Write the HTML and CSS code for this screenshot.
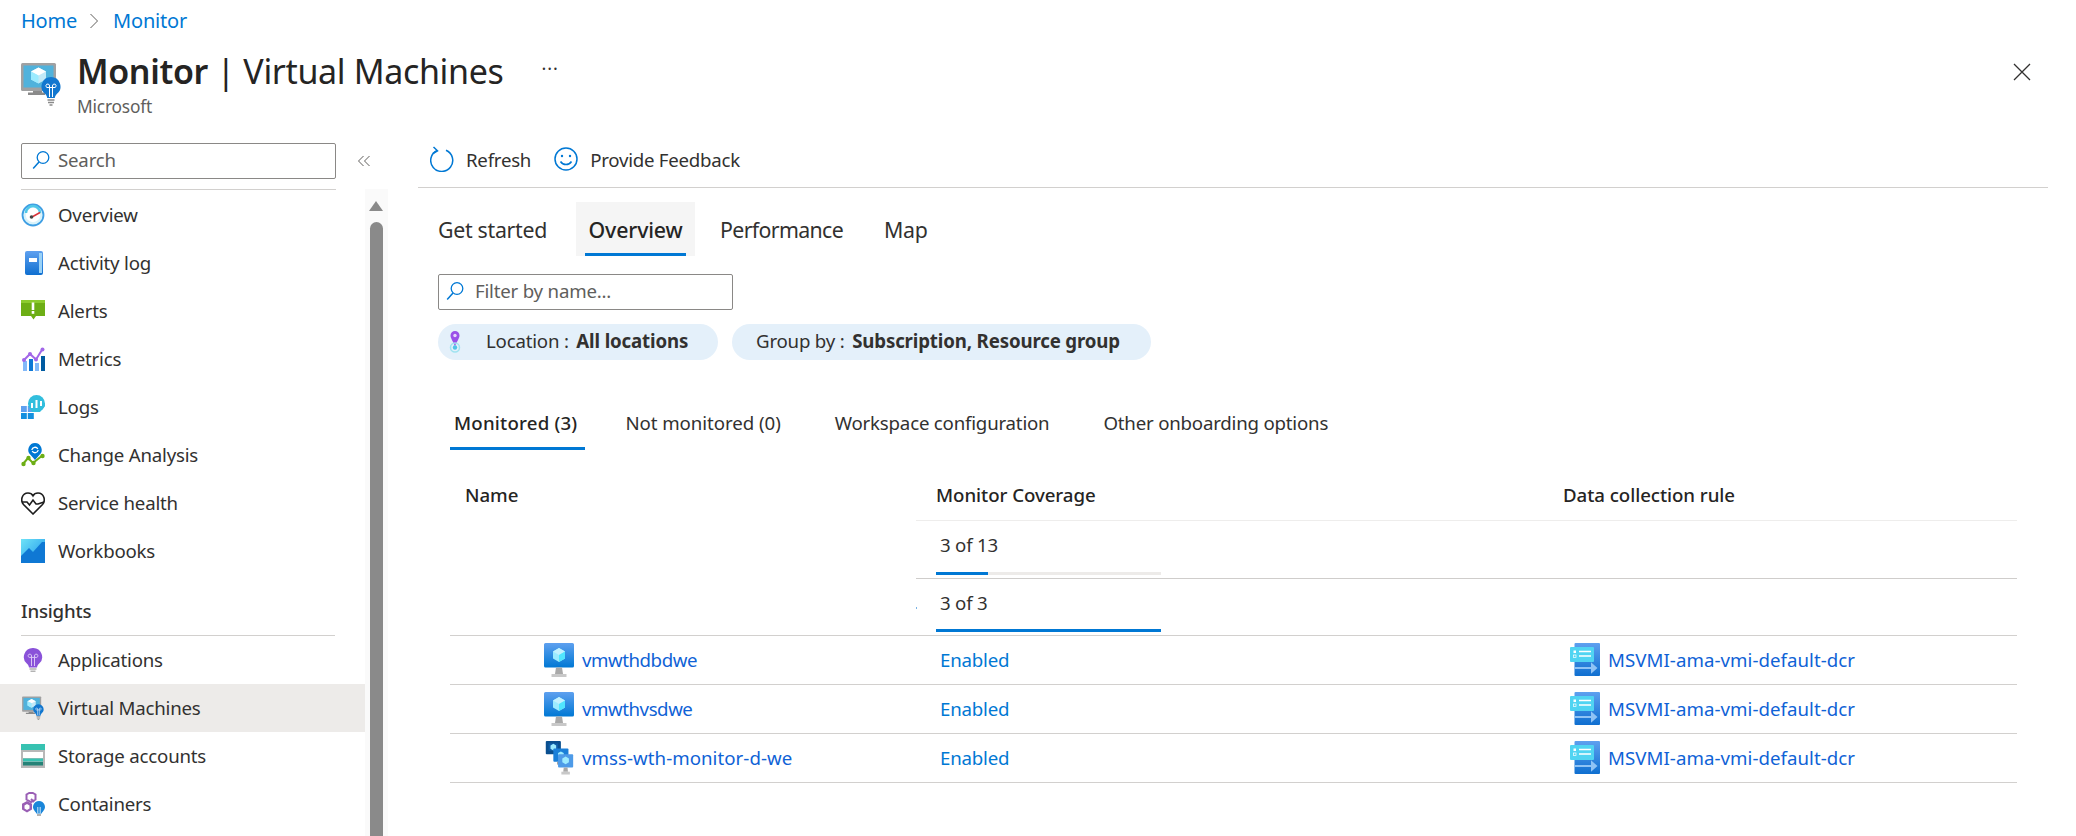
FILE: index.html
```html
<!DOCTYPE html>
<html lang="en">
<head>
<meta charset="utf-8">
<title>Monitor | Virtual Machines</title>
<link rel="stylesheet" href="styles.css">
</head>
<body>
<svg class="defs" width="0" height="0" aria-hidden="true">
  <defs>
    <linearGradient id="gScreen" x1="0" y1="0" x2="0" y2="1"><stop offset="0" stop-color="#5ea0ef"/><stop offset="1" stop-color="#0078d4"/></linearGradient>
    <linearGradient id="gBook" x1="0" y1="0" x2="0" y2="1"><stop offset="0" stop-color="#5ea0ef"/><stop offset="1" stop-color="#0f6fd0"/></linearGradient>
    <linearGradient id="gWork" x1="0" y1="0" x2="1" y2="1"><stop offset="0" stop-color="#6fe3f7"/><stop offset="1" stop-color="#1b93eb"/></linearGradient>
    <symbol id="i-search" viewBox="0 0 18 20"><circle cx="11" cy="7.5" r="5.8" fill="none" stroke="#0078d4" stroke-width="1.3"/><path d="M7 12 1.2 18.6" stroke="#0078d4" stroke-width="1.5" fill="none"/></symbol>
    <symbol id="i-vminsight" viewBox="0 0 40 44">
      <rect x="0" y="1" width="35" height="28" rx="1.5" fill="#a0a1a2"/><rect x="2.5" y="3.5" width="30" height="22" fill="#50b2dc"/>
      <path d="M7 33h17v-2.500h-3V29h-9v1.500H7z" fill="#8a8a8a"/>
      <path d="M17.500 5.500 25 9.500v8l-7.500 4-7.500-4v-8z" fill="#c3e9f7"/><path d="M17.500 5.500 25 9.500l-7.500 4-7.500-4z" fill="#fff"/><path d="M17.500 13.500v8l-7.500-4v-8z" fill="#9cebff"/>
      <path d="M30 15a9.500 9.500 0 0 0-6 16.800c1.300 1.200 2 2.500 2.200 4.200h7.600c.2-1.700 1-3 2.200-4.200A9.500 9.500 0 0 0 30 15z" fill="#1277cf"/>
      <path d="M28.500 35v-11m3 11v-11M28.500 24a1.800 1.800 0 1 0-2.500 1.500h8a1.800 1.800 0 1 0-2.500-1.500" fill="none" stroke="#fff" stroke-width="1"/>
      <path d="M26.500 38h7M27 40.500h6M28.500 43h3" stroke="#8a8a8a" stroke-width="1.500"/>
    </symbol>
    <symbol id="i-overview" viewBox="0 0 24 24"><circle cx="12" cy="12" r="10.500" fill="#d8f3fb" stroke="#3e9ee3" stroke-width="1.800"/><circle cx="12" cy="12" r="7.200" fill="#fff"/><path d="M5 10a7 7 0 0 1 14 0" fill="none" stroke="#50c7e8" stroke-width="2.500"/><path d="M11 14 19 9.500" stroke="#d8333b" stroke-width="1.500"/><circle cx="10.500" cy="14" r="1.800" fill="#444"/></symbol>
    <symbol id="i-book" viewBox="0 0 24 24"><rect x="4" y="0" width="18" height="24" rx="2" fill="url(#gBook)"/><rect x="18" y="2" width="3" height="20" fill="#9ad2f6"/><rect x="8" y="7" width="8" height="4" fill="#fff"/></symbol>
    <symbol id="i-alert" viewBox="0 0 24 24"><path d="M0 1h24v16H15l-2.500 3.500L10 17H0z" fill="#6dae15"/><rect x="0" y="1" width="24" height="3" fill="#8ccb2e"/><rect x="10.700" y="3.500" width="2.600" height="7.500" fill="#fff"/><rect x="10.700" y="12" width="2.600" height="2.800" fill="#fff"/></symbol>
    <symbol id="i-metrics" viewBox="0 0 24 24"><rect x="2" y="14" width="4" height="10" fill="#83b9f9"/><rect x="8" y="12" width="4" height="12" fill="#0f78d4"/><rect x="14" y="16" width="4" height="8" fill="#83b9f9"/><rect x="20" y="9" width="4" height="15" fill="#005ba1"/><path d="M3 13 9 7l6 5.500L21.500 2" fill="none" stroke="#a267e8" stroke-width="2"/><circle cx="3" cy="13" r="2" fill="#a267e8"/><circle cx="9" cy="7" r="2" fill="#a267e8"/><circle cx="15" cy="12.500" r="2" fill="#a267e8"/><circle cx="21.500" cy="2.500" r="2" fill="#a267e8"/></symbol>
    <symbol id="i-logs" viewBox="0 0 24 24"><rect x="0" y="11" width="5.800" height="6" fill="#5ea0ef"/><rect x="0" y="18" width="5.800" height="6" fill="#1490df"/><rect x="6.800" y="11" width="6" height="6" fill="#5ea0ef"/><rect x="6.800" y="18" width="6" height="6" fill="#1490df"/><circle cx="15.500" cy="8.500" r="8.500" fill="#32bedd"/><path d="M7 8h17v3l-5 6h-8z" fill="#32bedd"/><path d="M11 8v5M15.500 5v8M20 6v5" stroke="#fff" stroke-width="2"/></symbol>
    <symbol id="i-change" viewBox="0 0 24 24"><path d="M2 21 7 15l5 5 10-8" fill="none" stroke="#6dae15" stroke-width="2"/><circle cx="2.500" cy="21" r="2.200" fill="#6dae15"/><circle cx="7.500" cy="15" r="2.200" fill="#6dae15"/><circle cx="12.500" cy="20" r="2.200" fill="#6dae15"/><circle cx="21.500" cy="13" r="2.200" fill="#6dae15"/><path d="M14 0a6.800 6.800 0 0 0-4.800 11.500L14 17l4.800-5.500A6.800 6.800 0 0 0 14 0z" fill="#0078d4"/><path d="M10.800 7a3.200 3.200 0 0 1 6-1M17.200 7a3.200 3.200 0 0 1-6 1" fill="none" stroke="#fff" stroke-width="1.300"/></symbol>
    <symbol id="i-health" viewBox="0 0 24 24"><path d="M12 23 2.500 13.500C-1 9.500 1 2 7 2c2.500 0 4 1 5 2.800C13 3 14.500 2 17 2c6 0 8 7.500 4.500 11.500z" fill="#fff" stroke="#1d1d1d" stroke-width="1.600"/><path d="M1 11h5l2.500 3 3.500-5 3 4h2l6-2" fill="#fff" stroke="#1d1d1d" stroke-width="1.600"/></symbol>
    <symbol id="i-work" viewBox="0 0 24 24"><path d="M0 0h24v24H0z" fill="url(#gWork)"/><path d="M0 17 8 9l4 4L21 3h3v21H0z" fill="#0f78d4"/></symbol>
    <symbol id="i-app" viewBox="0 0 24 24"><path d="M12 0a9 9 0 0 0-6 15.800c1.200 1.100 1.800 2.200 2 3.700h8c.2-1.500.8-2.600 2-3.700A9 9 0 0 0 12 0z" fill="#8a52d9"/><path d="M10.500 18V8m3 10V8M10.500 8a1.700 1.700 0 1 0-2.300 1.400h7.600A1.700 1.700 0 1 0 13.500 8" fill="none" stroke="#d9c4f5" stroke-width="1"/><path d="M8.500 21h7M9.500 23.200h5" stroke="#b3b3b3" stroke-width="1.600"/></symbol>
    <symbol id="i-storage" viewBox="0 0 24 24"><rect x="0" y="0" width="24" height="24" fill="#b8b8b8"/><rect x="0" y="0" width="24" height="6" fill="#37c2b1"/><rect x="2" y="8" width="20" height="6" fill="#fff"/><rect x="2" y="14.500" width="20" height="3" fill="#37c2b1"/><rect x="2" y="18" width="20" height="3.500" fill="#258277"/></symbol>
    <symbol id="i-cont" viewBox="0 0 24 24"><path d="M10 0l4.500 2.500v5L10 10 5.500 7.500v-5z" fill="none" stroke="#9a5fb5" stroke-width="2"/><path d="M6 9l5 2.800v5.800L6 20.500 1 17.600v-5.800z" fill="#9a5fb5"/><path d="M6 12l2.500 1.500v3L6 18l-2.500-1.500v-3z" fill="#fff"/><path d="M10 7l3 3" stroke="#9a5fb5" stroke-width="2"/><path d="M18 9a6 6 0 0 0-4 10.400c.8.800 1.200 1.400 1.300 2.100h5.400c.1-.7.500-1.300 1.300-2.100A6 6 0 0 0 18 9z" fill="#1a86d9"/><path d="M16.800 21v-6m2.400 6v-6" stroke="#fff" stroke-width=".8"/><path d="M16 23h4" stroke="#888" stroke-width="1.300"/></symbol>
    <symbol id="i-vm" viewBox="0 0 30 34"><path d="M1.500 0h27A1.500 1.500 0 0 1 30 1.500V23a1.500 1.500 0 0 1-1.500 1.500h-27A1.500 1.500 0 0 1 0 23V1.500A1.500 1.500 0 0 1 1.500 0z" fill="url(#gScreen)"/><path d="M15 5 21 8.500v7L15 19l-6-3.500v-7z" fill="#9cebff"/><path d="M15 5 21 8.500l-6 3.500-6-3.500z" fill="#c3f1ff"/><path d="M15 12v7l6-3.500v-7z" fill="#50e6ff"/><path d="M12 24.500h6l1 6.500h-8z" fill="#a9a9a9"/><path d="M7.500 31h15v3h-15z" fill="#c8c8c8"/></symbol>
    <symbol id="i-vmss" viewBox="0 0 30 36"><rect x="1" y="0" width="16" height="14" rx="1" fill="#0a4f8f"/><rect x="4" y="2.500" width="10" height="8" fill="#0f5da8"/><path d="M9 3l3 1.700v3.600L9 10 6 8.300V4.700z" fill="#9cebff"/><rect x="9" y="8" width="16" height="14" rx="1" fill="#1a7fd8"/><path d="M17 11l3 1.700v3.600L17 18l-3-1.700v-3.600z" fill="#9cebff"/><path d="M13 22h8v3h-8z" fill="#999"/><rect x="14" y="14" width="16" height="14" rx="1" fill="#4e9be8"/><path d="M22 16.500l3.500 2v4l-3.500 2-3.500-2v-4z" fill="#9cebff"/><path d="M20 28h4l.5 4.500h-5z" fill="#a9a9a9"/><path d="M17.500 32.500h9v3h-9z" fill="#c8c8c8"/></symbol>
    <symbol id="i-dcr" viewBox="0 0 30 33"><rect x="4.500" y="0" width="25.500" height="33" rx="1" fill="url(#gBook)"/><rect x="0" y="4" width="24" height="15" rx="1" fill="#50d4f2"/><path d="M9 8.500h12M9 13h12" stroke="#fff" stroke-width="1.400"/><rect x="3.500" y="7.500" width="2.500" height="2.500" fill="#fff"/><rect x="3.500" y="12" width="2.500" height="2.500" fill="none" stroke="#fff" stroke-width=".7"/><path d="M4.500 25H25M22 21.500 26 25l-4 3.500z" stroke="#8fc3f5" stroke-width="2" fill="#8fc3f5"/></symbol>
    <symbol id="i-pin" viewBox="0 0 12 22"><path d="M6 0a4.500 4.500 0 0 0-4.500 4.500C1.500 7.500 4.500 11 6 15.500 7.500 11 10.500 7.500 10.500 4.500A4.500 4.500 0 0 0 6 0z" fill="#9a4fe8"/><circle cx="6" cy="4.500" r="1.700" fill="#e6d5fa"/><circle cx="6" cy="16.500" r="4.500" fill="none" stroke="#9fe3f0" stroke-width="1.500"/><circle cx="6" cy="16.500" r="2.200" fill="#4fc3e8"/></symbol>
  </defs>
</svg>

<header class="page-head">
  <nav class="crumbs"><a class="link">Home</a><svg class="crumb-sep" viewBox="0 0 10 16"><path d="M1.500 1 8.500 8l-7 7" fill="none" stroke="#605e5c" stroke-width="1"/></svg><a class="link">Monitor</a></nav>
  <div class="title-row">
    <svg class="title-icon"><use href="#i-vminsight"/></svg>
    <div class="title-text">
      <h1 class="title"><b class="title-strong">Monitor</b> | Virtual Machines</h1>
      <div class="subtitle">Microsoft</div>
    </div>
    <span class="ellipsis">···</span>
    <svg class="close" viewBox="0 0 18 18"><path d="M1 1l16 16M17 1 1 17" stroke="#323130" stroke-width="1.300" fill="none"/></svg>
  </div>
</header>

<div class="layout">
  <aside class="sidebar">
    <div class="side-main">
      <div class="side-search-row">
        <div class="searchbox side-search"><svg class="search-icon"><use href="#i-search"/></svg><span class="placeholder">Search</span></div>
      </div>
      <nav class="side-nav">
        <a class="nav-item"><svg class="nav-icon"><use href="#i-overview"/></svg>Overview</a>
        <a class="nav-item"><svg class="nav-icon"><use href="#i-book"/></svg>Activity log</a>
        <a class="nav-item"><svg class="nav-icon"><use href="#i-alert"/></svg>Alerts</a>
        <a class="nav-item"><svg class="nav-icon"><use href="#i-metrics"/></svg>Metrics</a>
        <a class="nav-item"><svg class="nav-icon"><use href="#i-logs"/></svg>Logs</a>
        <a class="nav-item"><svg class="nav-icon"><use href="#i-change"/></svg>Change Analysis</a>
        <a class="nav-item"><svg class="nav-icon"><use href="#i-health"/></svg>Service health</a>
        <a class="nav-item"><svg class="nav-icon"><use href="#i-work"/></svg>Workbooks</a>
        <div class="nav-section">Insights</div>
        <a class="nav-item"><svg class="nav-icon"><use href="#i-app"/></svg>Applications</a>
        <a class="nav-item active"><svg class="nav-icon"><use href="#i-vminsight"/></svg>Virtual Machines</a>
        <a class="nav-item"><svg class="nav-icon"><use href="#i-storage"/></svg>Storage accounts</a>
        <a class="nav-item"><svg class="nav-icon"><use href="#i-cont"/></svg>Containers</a>
      </nav>
    </div>
    <div class="side-rail">
      <svg class="collapse" viewBox="0 0 14 14"><path d="M6.500 2 1.500 7l5 5M12.500 2l-5 5 5 5" fill="none" stroke="#605e5c" stroke-width="1"/></svg>
      <div class="scrolltrack">
        <span class="scroll-up"></span>
        <span class="scroll-thumb"></span>
      </div>
    </div>
  </aside>

  <main class="content">
    <div class="toolbar">
      <a class="tool"><svg class="tool-icon" viewBox="0 0 24 26"><path d="M7 4.500a11 11 0 1 0 9 -.2" fill="none" stroke="#0078d4" stroke-width="1.500"/><path d="M3.500 1 7.500 4.800 3 7.500" fill="none" stroke="#0078d4" stroke-width="1.500"/></svg>Refresh</a>
      <a class="tool"><svg class="tool-icon" viewBox="0 0 24 26"><circle cx="12" cy="13" r="11" fill="none" stroke="#0078d4" stroke-width="1.500"/><circle cx="8" cy="10" r="1.200" fill="#0078d4"/><circle cx="16" cy="10" r="1.200" fill="#0078d4"/><path d="M6.500 15.500c2.500 4 8.500 4 11 0" fill="none" stroke="#0078d4" stroke-width="1.500"/></svg>Provide Feedback</a>
    </div>

    <div class="tabs">
      <a class="tab">Get started</a>
      <a class="tab tab-active">Overview</a>
      <a class="tab tab-perf">Performance</a>
      <a class="tab">Map</a>
    </div>

    <div class="searchbox filter"><svg class="search-icon"><use href="#i-search"/></svg><span class="placeholder">Filter by name...</span></div>

    <div class="pills">
      <span class="pill pill-loc"><svg class="pin"><use href="#i-pin"/></svg>Location :&nbsp;<b class="pill-strong">All locations</b></span>
      <span class="pill pill-group">Group by :&nbsp;<b class="pill-strong">Subscription, Resource group</b></span>
    </div>

    <div class="subtabs">
      <a class="subtab subtab-active">Monitored (3)</a>
      <a class="subtab subtab-not">Not monitored (0)</a>
      <a class="subtab">Workspace configuration</a>
      <a class="subtab">Other onboarding options</a>
    </div>

    <section class="table">
      <div class="row head-row">
        <div class="col-name">Name</div>
        <div class="col-cov">Monitor Coverage</div>
        <div class="col-dcr">Data collection rule</div>
      </div>
      <div class="row summary">
        <div></div>
        <div class="sum-cell sum-first"><span class="sum-text">3 of 13</span><span class="bar"><span class="bar-fill" style="width:23%"></span></span></div>
      </div>
      <div class="row summary">
        <div></div>
        <div class="sum-cell sum-second"><span class="speck"></span><span class="sum-text">3 of 3</span><span class="bar"><span class="bar-fill" style="width:100%"></span></span></div>
      </div>
      <div class="row data-row">
        <div class="cell-name"><svg class="res-icon"><use href="#i-vm"/></svg><a class="res-link">vmwthdbdwe</a></div>
        <div class="cell-cov"><a class="link">Enabled</a></div>
        <div class="cell-dcr"><svg class="dcr-icon"><use href="#i-dcr"/></svg><a class="res-link res-wide">MSVMI-ama-vmi-default-dcr</a></div>
      </div>
      <div class="row data-row">
        <div class="cell-name"><svg class="res-icon"><use href="#i-vm"/></svg><a class="res-link">vmwthvsdwe</a></div>
        <div class="cell-cov"><a class="link">Enabled</a></div>
        <div class="cell-dcr"><svg class="dcr-icon"><use href="#i-dcr"/></svg><a class="res-link res-wide">MSVMI-ama-vmi-default-dcr</a></div>
      </div>
      <div class="row data-row">
        <div class="cell-name"><svg class="res-icon"><use href="#i-vmss"/></svg><a class="res-link res-wide">vmss-wth-monitor-d-we</a></div>
        <div class="cell-cov"><a class="link">Enabled</a></div>
        <div class="cell-dcr"><svg class="dcr-icon"><use href="#i-dcr"/></svg><a class="res-link res-wide">MSVMI-ama-vmi-default-dcr</a></div>
      </div>
    </section>
  </main>
</div>
</body>
</html>
```
FILE: styles.css
```css
* { box-sizing: border-box; }
html, body { margin: 0; height: 100%; overflow: hidden; background: #fff; }
body {
  font-family: "Noto Sans", "Open Sans", "Liberation Sans", sans-serif;
  font-size: 18.67px;
  letter-spacing: -0.2px;
  color: #323130;
}
.defs { position: absolute; }
.link { color: #0078d4; }
b { font-weight: 600; }

.page-head { height: 143px; padding: 0 0 0 21px; }
.crumbs { display: flex; align-items: center; height: 41px; font-size: 20px; }
.crumb-sep { width: 10px; height: 16px; margin: 0 14px 0 12px; }
.title-row { display: flex; align-items: flex-start; padding-top: 21px; }
.title-icon { width: 40px; height: 44px; margin-right: 16px; flex: none; }
.title-text { margin-top: -13px; }
.title { margin: 0; font-size: 34px; font-weight: 400; line-height: 44px; letter-spacing: -0.35px; color: #252423; }
.title-strong { font-weight: 600; }
.subtitle { font-size: 17.33px; line-height: 22px; margin-top: 2px; color: #605e5c; letter-spacing: -0.2px; }
.ellipsis { margin: -9px 0 0 38px; font-size: 18px; line-height: 30px; letter-spacing: 1px; color: #323130; }
.close { width: 18px; height: 18px; margin: 1px 45px 0 auto; flex: none; }

.layout { display: flex; height: 693px; overflow: hidden; }
.sidebar { display: flex; width: 418px; flex: none; }
.side-main { width: 365px; flex: none; }
.side-search-row { padding-left: 21px; padding-right: 30px; }
.searchbox { display: flex; align-items: center; height: 36px; padding-bottom: 3px; border: 1px solid #8a8886; border-radius: 2px; background: #fff; }
.side-search { width: 315px; }
.search-icon { width: 18px; height: 20px; margin: 0 8px 0 10px; flex: none; }
.placeholder { color: #605e5c; font-size: 18.67px; }
.side-nav { margin-top: 10px; background: linear-gradient(#d2d0ce, #d2d0ce) 21px 0 / 315px 1px no-repeat; padding-top: 2px; }
.nav-item { display: flex; align-items: center; height: 48px; padding: 0 0 2px 21px; color: #323130; }
.nav-item.active { background: #edebe9; }
.nav-icon { width: 24px; height: 24px; margin: 2px 13px 0 0; flex: none; }
.nav-section { height: 61px; margin-left: 21px; margin-right: 30px; padding-top: 22px; line-height: 27px; font-weight: 500; border-bottom: 1px solid #d2d0ce; }
.side-rail { width: 53px; flex: none; display: flex; flex-direction: column; min-height: 0; }
.collapse { width: 14px; height: 14px; margin: 11px 0 0 -8px; display: block; flex: none; }
.scrolltrack { width: 23px; flex: 1; min-height: 0; margin-top: 21px; background: #fafafa; padding: 12px 5px 0; display: flex; flex-direction: column; overflow: hidden; }
.scroll-up { display: block; flex: none; width: 0; height: 0; border-left: 7px solid transparent; border-right: 7px solid transparent; border-bottom: 10px solid #8a8a8a; margin-left: -1px; }
.scroll-thumb { display: block; flex: 1; width: 13px; margin-top: 11px; background: #8a8a8a; border-radius: 7px 7px 0 0; }

.content { flex: 1; min-width: 0; padding-right: 28px; }
.toolbar { display: flex; height: 45px; border-bottom: 1px solid #d2d0ce; gap: 23px; padding: 0 0 12px 12px; align-items: center; letter-spacing: -0.25px; }
.tool { display: flex; align-items: center; color: #323130; }
.tool-icon { width: 24px; height: 26px; margin-right: 12px; flex: none; }
.tabs { display: flex; margin: 14px 0 0 9px; height: 54px; }
.tab { display: flex; align-items: center; padding: 0 11px; margin-right: 18px; font-size: 21.33px; color: #323130; letter-spacing: -0.3px; position: relative; white-space: nowrap; }
.tab-active { width: 119px; justify-content: center; padding: 0; margin-right: 14px; background: #f5f5f5; color: #252423; font-weight: 500; letter-spacing: -0.15px; }
.tab-active::after { content: ""; position: absolute; left: 9px; right: 9px; bottom: 0; height: 3px; background: #0078d4; }
.tab-perf { margin-right: 19px; letter-spacing: -0.65px; }
.filter { width: 295px; margin: 18px 0 0 20px; }
.filter .search-icon { margin: 0 11px 0 7px; }
.pills { display: flex; gap: 14px; margin: 14px 0 0 20px; }
.pill { display: flex; align-items: center; height: 36px; padding-bottom: 4px; border-radius: 18px; background: #e4f0fa; color: #323130; white-space: nowrap; }
.pill-loc { width: 280px; padding-left: 11px; }
.pill-group { width: 419px; padding-left: 24px; }
.pill-strong { font-weight: 700; letter-spacing: -0.15px; margin-left: 3px; }
.pin { width: 12px; height: 22px; margin: 4px 25px 0 0; flex: none; }
.subtabs { display: flex; margin: 50px 0 0 32px; height: 40px; align-items: flex-start; }
.subtab { position: relative; height: 40px; line-height: 26px; padding: 0 4px; margin-right: 46px; white-space: nowrap; }
.subtab-active { font-weight: 500; color: #252423; padding-right: 8px; margin-right: 36px; letter-spacing: 0.2px; }
.subtab-active::after { content: ""; position: absolute; left: 0; right: 0; bottom: 0; height: 3px; background: #0078d4; }
.subtab-not { letter-spacing: -0.05px; }

.table { margin: 0 0 0 32px; width: 1567px; }
.row { display: grid; grid-template-columns: 466px 632px 469px; }
.head-row { height: 70px; padding-top: 18px; align-items: center; font-weight: 500; color: #252423; letter-spacing: -0.05px; }
.col-name { padding-left: 15px; }
.col-cov { padding-left: 20px; }
.col-dcr { padding-left: 15px; }
.summary { height: 58px; }
.summary + .summary { height: 57px; }
.sum-cell { grid-column: 2 / 4; position: relative; padding: 0 0 0 24px; border-top: 1px solid #eeedec; }
.sum-second { border-top-color: #cfcdcb; }
.sum-text { display: block; line-height: 25px; padding-top: 11px; }
.bar { position: absolute; left: 20px; bottom: 3px; width: 225px; height: 3px; background: #edebe9; }
.bar-fill { display: block; height: 100%; background: #0078d4; }
.speck { position: absolute; left: 0; top: 28px; width: 1px; height: 2px; background: #7ab4e6; }
.data-row { height: 49px; border-top: 1px solid #d2d0ce; align-items: center; padding-bottom: 1px; }
.data-row:last-child { height: 50px; border-bottom: 1px solid #d2d0ce; }
.cell-name { display: flex; align-items: center; padding-left: 94px; }
.cell-cov { padding-left: 24px; }
.cell-dcr { display: flex; align-items: center; padding-left: 22px; }
.res-icon { width: 30px; height: 34px; margin-right: 8px; flex: none; }
.dcr-icon { width: 30px; height: 33px; margin-right: 8px; flex: none; }
.res-link { color: #0f62d6; white-space: nowrap; letter-spacing: -0.45px; }
.res-wide { letter-spacing: 0.05px; }
.cell-cov .link { color: #0078d4; }
```
